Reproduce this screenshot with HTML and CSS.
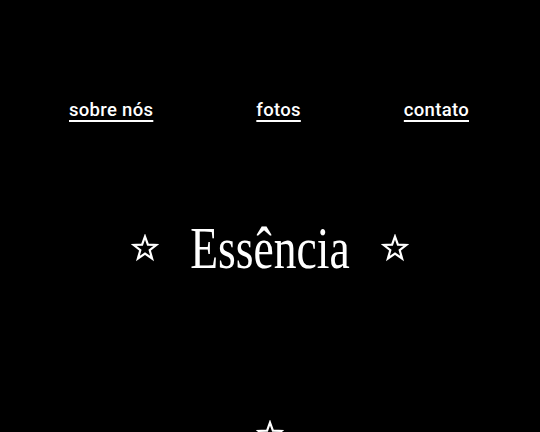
FILE: index.html
```html
<!DOCTYPE html>
<html lang="pt">
<head>
<meta charset="utf-8">
<title>Essência</title>
<link rel="stylesheet" href="styles.css">
</head>
<body>
<div class="page">
  <nav class="nav">
    <a href="#">sobre nós</a>
    <a href="#">fotos</a>
    <a href="#">contato</a>
  </nav>
  <header class="hero">
    <svg class="star" viewBox="0 0 28 28"><path d="M14 2.5 L16.9 10.6 L25.5 10.9 L18.7 16.2 L21.1 24.5 L14 19.6 L6.9 24.5 L9.3 16.2 L2.5 10.9 L11.1 10.6 Z"/></svg>
    <h1 class="title"><span>Essência</span></h1>
    <svg class="star" viewBox="0 0 28 28"><path d="M14 2.5 L16.9 10.6 L25.5 10.9 L18.7 16.2 L21.1 24.5 L14 19.6 L6.9 24.5 L9.3 16.2 L2.5 10.9 L11.1 10.6 Z"/></svg>
  </header>
  <div class="divider">
    <svg class="star" viewBox="0 0 28 28"><path d="M14 2.5 L16.9 10.6 L25.5 10.9 L18.7 16.2 L21.1 24.5 L14 19.6 L6.9 24.5 L9.3 16.2 L2.5 10.9 L11.1 10.6 Z"/></svg>
  </div>
</div>
</body>
</html>
```
FILE: styles.css
```css
html, body {
  margin: 0;
  background: #000;
  color: #fff;
  overflow: hidden;
}
.page {
  height: 432px;
  display: flex;
  flex-direction: column;
}
.nav {
  display: flex;
  justify-content: space-between;
  padding: 98px 71px 0 69px;
  font-family: Roboto, sans-serif;
  font-weight: 500;
  font-size: 18.5px;
  line-height: 24px;
  letter-spacing: 0.3px;
}
.nav a {
  color: #fff;
  text-decoration: underline;
  text-decoration-thickness: 2px;
  text-underline-offset: 4px;
}
.hero {
  display: flex;
  justify-content: center;
  align-items: center;
  gap: 31px;
  margin-top: 96px;
}
.title {
  margin: 0;
  width: 160px;
  display: flex;
  justify-content: center;
  font-family: "Liberation Serif", serif;
  font-weight: 400;
  font-size: 60px;
  line-height: 60px;
}
.title span {
  display: block;
  white-space: nowrap;
  transform: scaleX(0.76);
}
.star {
  width: 28px;
  height: 28px;
  fill: none;
  stroke: #fff;
  stroke-width: 2.2;
  stroke-linejoin: miter;
}
.divider {
  display: flex;
  justify-content: center;
  margin-top: 142px;
}
```
